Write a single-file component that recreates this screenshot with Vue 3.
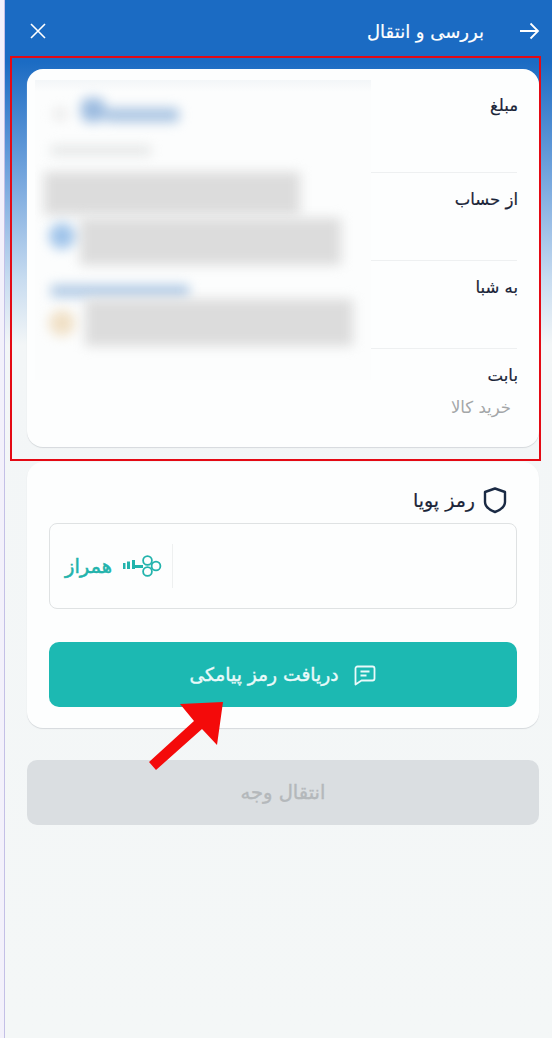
<template>
  <div class="app" dir="rtl">
    <header class="topbar">
      <svg class="ic" width="22" height="22" viewBox="0 0 22 22" fill="none" stroke="#fff" stroke-width="1.8">
        <path d="M2 11h18M12.5 3.500 20 11l-7.500 7.500" />
      </svg>
      <span class="title">بررسی و انتقال</span>
      <svg class="ic close" width="18" height="18" viewBox="0 0 18 18" fill="none" stroke="#fff" stroke-width="1.600">
        <path d="M2 2l14 14M16 2 2 16" />
      </svg>
    </header>

    <section class="card review">
      <div class="fields">
        <div v-for="f in fields" :key="f.label" class="field">
          <div class="label">{{ f.label }}</div>
          <div v-if="f.value" class="value">{{ f.value }}</div>
        </div>
      </div>
      <div class="hidden-info" dir="ltr">
        <div class="blur amount">
          <i class="dot-gray"></i>
          <i class="bump"></i>
          <i class="amount-text"></i>
        </div>
        <div class="blur sub-text"></div>
        <div class="blur gray-a"></div>
        <div class="blur line">
          <i class="round blue"></i>
          <i class="gray-b"></i>
        </div>
        <div class="blur blue-text"></div>
        <div class="blur line second">
          <i class="round orange"></i>
          <i class="gray-c"></i>
        </div>
      </div>
    </section>

    <section class="card otp">
      <div class="otp-title">
        <svg width="24" height="28" viewBox="0 0 24 28" fill="none" stroke="#1a2a44" stroke-width="2.400" stroke-linejoin="round">
          <path d="M12 2.500 22 6v10c0 4.500-4 7.800-10 10C6 23.800 2 20.500 2 16V6z" />
        </svg>
        <span>رمز پویا</span>
      </div>
      <div class="otp-input">
        <div class="harmony" dir="ltr">
          <span class="harmony-name" dir="rtl">همراز</span>
          <svg width="39" height="22" viewBox="0 0 39 22" fill="none">
            <path d="M1 8v6M5.500 6.500V14M10.500 5v9" stroke="#22b3ac" stroke-width="3" />
            <path d="M10 11.500h10" stroke="#22b3ac" stroke-width="3" />
            <circle cx="24.500" cy="5.500" r="4.400" stroke="#22b3ac" stroke-width="1.800" />
            <circle cx="24.500" cy="16.500" r="4.400" stroke="#22b3ac" stroke-width="1.800" />
            <circle cx="33" cy="11" r="4.400" stroke="#22b3ac" stroke-width="1.800" />
          </svg>
        </div>
      </div>
      <button class="sms-btn" type="button">
        <svg width="24" height="24" viewBox="0 0 24 24" fill="none" stroke="#eafafa" stroke-width="1.800" stroke-linejoin="round">
          <path d="M4.500 3.500h15a2 2 0 0 1 2 2v10a2 2 0 0 1-2 2H8.500L2.500 21.500v-16a2 2 0 0 1 2-2z" />
          <path d="M7.500 8.500h9M7.500 12.500h6" />
        </svg>
        <span>دریافت رمز پیامکی</span>
      </button>
    </section>

    <button class="submit" type="button" disabled>انتقال وجه</button>

    <div class="highlight"></div>
    <svg class="pointer" width="90" height="80" viewBox="0 0 90 80">
      <path d="M75 1 69 44 54 28 8 69 1 61 46 20 32 3z" fill="#f40a0a" />
    </svg>
  </div>
</template>

<script setup>
const fields = [
  { label: 'مبلغ' },
  { label: 'از حساب' },
  { label: 'به شبا' },
  { label: 'بابت', value: 'خرید کالا' },
]
</script>

<style>
html, body { background: #f3f1fb; }
</style>

<style scoped>
.app {
  position: relative;
  box-sizing: border-box;
  width: 548px;
  height: 1038px;
  margin-left: 4px;
  border-left: 1px solid #c4c0e6;
  overflow: hidden;
  padding: 0 13px 0 22px;
  font-family: "DejaVu Sans", "Noto Sans", sans-serif;
  color: #1a2438;
  background: linear-gradient(180deg, #1b6bc3 0, #1b6bc3 62px, #6fa2dc 170px, #c8dcf0 280px, #f3f6f7 345px, #f4f7f7 100%);
}
.topbar {
  display: flex;
  align-items: center;
  height: 62px;
  margin: 0 -1px 7px 2px;
  color: #fff;
}
.title { margin-right: 34px; font-size: 18px; -webkit-text-stroke: 0.2px #fff; }
.close { margin-right: auto; }

.card {
  box-sizing: border-box;
  background: #fdfefe;
  border-radius: 16px;
  box-shadow: 0 1px 1px #d5d9dc;
}
.review {
  display: flex;
  height: 378px;
  padding: 0 22px 0 8px;
  margin-bottom: 15px;
}
.fields { width: 146px; padding-top: 10px; }
.field { box-sizing: border-box; height: 88px; padding-top: 15px; border-bottom: 1px solid #eef0f1; }
.field:first-child { height: 94px; }
.field:last-child { border-bottom: 0; }
.label { height: 24px; margin-right: -1px; font-size: 16.5px; line-height: 24px; -webkit-text-stroke: 0.2px #1a2438; }
.value { margin-top: 8px; padding-right: 6px; font-size: 16.5px; line-height: 24px; color: #a3a6a8; }

.hidden-info {
  width: 337px;
  height: 300px;
  margin-top: 11px;
  overflow: hidden;
  background: linear-gradient(180deg, #f3f6f8 0, #fcfdfd 12px);
}
.blur { filter: blur(6px); }
.amount { display: flex; align-items: center; padding: 15px 0 0 18px; height: 30px; }
.dot-gray { width: 14px; height: 12px; background: #e8e8e8; border-radius: 50%; margin: 8px 14px 0 0; }
.bump { width: 24px; height: 24px; background: #9dbce0; border-radius: 8px; }
.amount-text { width: 74px; height: 14px; margin-top: 10px; background: #a9c4e2; border-radius: 4px; }
.sub-text { width: 100px; height: 9px; margin: 21px 0 0 16px; background: #e2e4e4; }
.gray-a { width: 256px; height: 43px; margin: 17px 0 0 9px; background: #dcdcdc; }
.line { display: flex; align-items: center; margin-top: 3px; padding-left: 14px; }
.round { flex: none; width: 26px; height: 26px; border-radius: 50%; }
.blue { margin-bottom: 12px; background: #a0c4ea; }
.orange { background: #f0e0c6; }
.gray-b { width: 261px; height: 47px; margin-left: 5px; background: #dcdcdc; }
.blue-text { width: 138px; height: 12px; margin: 20px 0 0 16px; background: #aec8e4; }
.second { margin-top: 2px; }
.gray-c { width: 268px; height: 47px; margin-left: 10px; background: #dcdcdc; }

.otp {
  height: 266px;
  padding: 23px 22px 0;
  margin-bottom: 32px;
}
.otp-title { display: flex; align-items: center; gap: 8px; height: 30px; margin-right: 10px; font-size: 19px; -webkit-text-stroke: 0.2px #1a2438; }
.otp-input {
  box-sizing: border-box;
  height: 86px;
  margin-top: 8px;
  border: 1.500px solid #dfe2e3;
  border-radius: 8px;
  display: flex;
  align-items: center;
  justify-content: flex-end;
}
.harmony {
  display: flex;
  align-items: center;
  gap: 11px;
  height: 44px;
  padding: 0 10px 0 15px;
  border-right: 1px solid #eef0f0;
}
.harmony-name { font-size: 19.500px; color: #22b3ac; -webkit-text-stroke: 0.5px #22b3ac; }
.sms-btn {
  display: flex;
  align-items: center;
  justify-content: center;
  gap: 14px;
  width: 100%;
  height: 65px;
  margin-top: 33px;
  border: 0;
  border-radius: 10px;
  background: #1cb9b2;
  color: #eafafa;
  font-family: inherit;
  font-size: 18.700px;
  -webkit-text-stroke: 0.4px #eafafa;
}
.submit {
  display: block;
  width: 100%;
  height: 65px;
  border: 0;
  border-radius: 10px;
  background: #dadee1;
  color: #b4b8bb;
  font-family: inherit;
  font-size: 19.500px;
  -webkit-text-stroke: 0.4px #b4b8bb;
}

/* annotation drawn over the screenshot */
.highlight {
  position: absolute;
  left: 5px;
  top: 56px;
  width: 527px;
  height: 401px;
  border: 2px solid #e40a14;
}
.pointer {
  position: absolute;
  left: 143px;
  top: 701px;
}
</style>
